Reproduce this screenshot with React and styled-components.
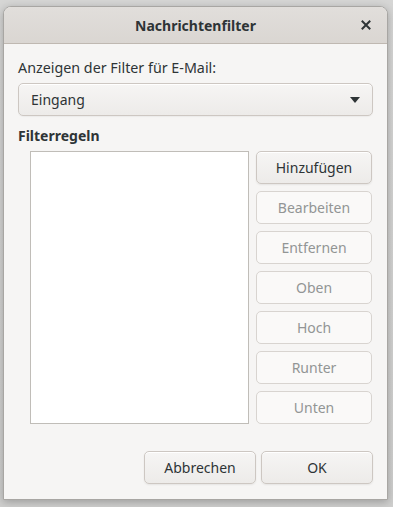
import React from "react";
import styled, { createGlobalStyle } from "styled-components";

const Global = createGlobalStyle`
  html, body { margin: 0; padding: 0; }
  body {
    width: 393px; height: 507px; overflow: hidden;
    background: linear-gradient(#d6d6d5, #cfcfce);
    font-family: "Noto Sans", "DejaVu Sans", sans-serif;
    font-size: 14px;
    color: #2e3436;
  }
`;

const Stage = styled.div`
  padding: 6px 5px 0 3px;
  box-sizing: border-box;
  height: 507px;
`;

const Window = styled.div`
  width: 385px;
  height: 494px;
  box-sizing: border-box;
  border: 1px solid #a8a6a3;
  border-radius: 8px 8px 0 0;
  background: #f6f5f4;
  box-shadow: 0 2px 8px rgba(0,0,0,0.25);
  display: flex;
  flex-direction: column;
  overflow: hidden;
`;

const TitleBar = styled.div`
  height: 36px;
  flex: none;
  background: linear-gradient(#e1dedb, #dad6d2);
  border-bottom: 1px solid #bfb8b1;
  display: flex;
  align-items: center;
  justify-content: center;
  position: relative;
`;

const Title = styled.div`
  font-weight: bold;
  font-size: 14px;
  color: #2e3436;
`;

const Close = styled.div`
  position: absolute;
  right: 14px;
  top: 11px;
  width: 14px;
  height: 14px;
  display: flex;
  align-items: center;
  justify-content: center;
`;

const Body = styled.div`
  flex: 1;
  display: flex;
  flex-direction: column;
  padding: 15px 14px 0 14px;
`;

const Label = styled.div`
  font-size: 14.3px;
  line-height: 18px;
  margin-bottom: 6px;
`;

const Combo = styled.div`
  height: 33px;
  box-sizing: border-box;
  border: 1px solid #cdc7c2;
  border-radius: 5px;
  background: linear-gradient(#f6f5f4, #edebe9);
  box-shadow: inset 0 1px #fff, 0 1px 1px rgba(0,0,0,0.04);
  display: flex;
  align-items: center;
  justify-content: space-between;
  padding: 0 12px 0 12px;
`;

const Section = styled.div`
  font-weight: bold;
  margin-top: 11px;
  line-height: 18px;
`;

const Main = styled.div`
  display: flex;
  gap: 7px;
  margin-top: 6px;
  padding-left: 12px;
`;

const List = styled.div`
  width: 219px;
  height: 273px;
  box-sizing: border-box;
  background: #fff;
  border: 1px solid #c0bdb8;
`;

const Buttons = styled.div`
  display: flex;
  flex-direction: column;
  gap: 7px;
`;

const Btn = styled.div`
  width: ${(p) => p.$w || 116}px;
  height: 33px;
  box-sizing: border-box;
  border-radius: 5px;
  display: flex;
  align-items: center;
  justify-content: center;
  font-size: 14px;
  border: 1px solid ${(p) => (p.$disabled ? "#d8d4d0" : "#cdc7c2")};
  background: ${(p) =>
    p.$disabled ? "#faf9f8" : "linear-gradient(#f6f5f4, #edebe9)"};
  color: ${(p) => (p.$disabled ? "#929595" : "#2e3436")};
  box-shadow: ${(p) =>
    p.$disabled ? "none" : "inset 0 1px #fff, 0 1px 2px rgba(0,0,0,0.07)"};
`;

const Footer = styled.div`
  display: flex;
  justify-content: flex-end;
  gap: 5px;
  margin-top: 27px;
`;

export default function App() {
  return (
    <>
      <Global />
      <Stage>
        <Window>
          <TitleBar>
            <Title>Nachrichtenfilter</Title>
            <Close>
              <svg width="10" height="10" viewBox="0 0 10 10">
                <path d="M1.5 1.5 L8.5 8.5 M8.5 1.5 L1.5 8.5" stroke="#2e3436" strokeWidth="2" strokeLinecap="square" />
              </svg>
            </Close>
          </TitleBar>
          <Body>
            <Label>Anzeigen der Filter für E-Mail:</Label>
            <Combo>
              <span>Eingang</span>
              <svg width="10" height="6" viewBox="0 0 10 6">
                <path d="M0 0 L10 0 L5 6 Z" fill="#2e3436" />
              </svg>
            </Combo>
            <Section>Filterregeln</Section>
            <Main>
              <List />
              <Buttons>
                <Btn>Hinzufügen</Btn>
                <Btn $disabled>Bearbeiten</Btn>
                <Btn $disabled>Entfernen</Btn>
                <Btn $disabled>Oben</Btn>
                <Btn $disabled>Hoch</Btn>
                <Btn $disabled>Runter</Btn>
                <Btn $disabled>Unten</Btn>
              </Buttons>
            </Main>
            <Footer>
              <Btn $w={112}>Abbrechen</Btn>
              <Btn $w={112}>OK</Btn>
            </Footer>
          </Body>
        </Window>
      </Stage>
    </>
  );
}
